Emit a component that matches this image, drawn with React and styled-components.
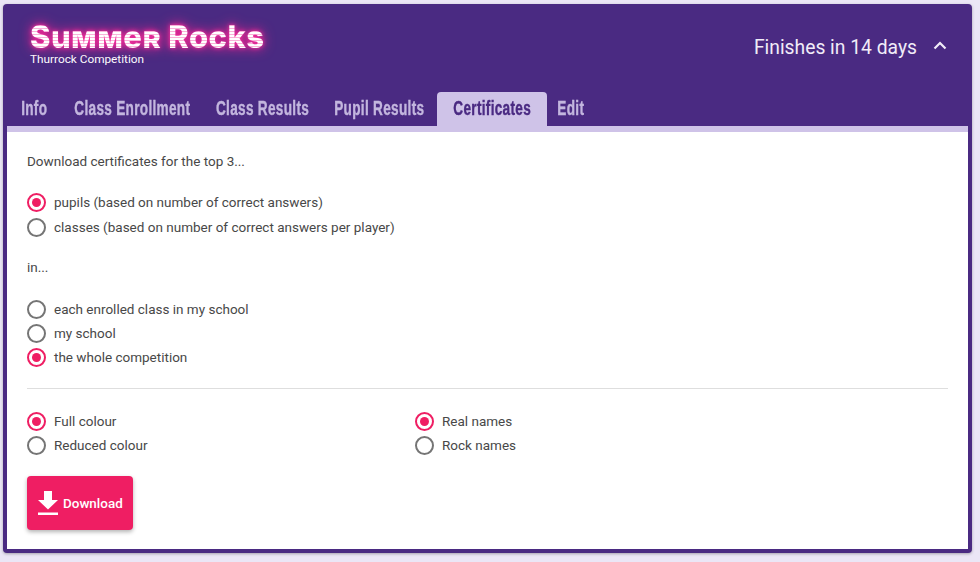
import React from "react";
import styled, { createGlobalStyle } from "styled-components";

const Global = createGlobalStyle`
  html, body { margin: 0; padding: 0; background: #ebe6f6; }
  body { font-family: Roboto, "Liberation Sans", sans-serif; overflow: hidden; }
`;
const Page = styled.div`
  width: 980px; height: 562px; box-sizing: border-box; padding: 4px 8px 9px 3px;
`;
const Card = styled.div`
  height: 100%; box-sizing: border-box; display: flex; flex-direction: column;
  background: #4a2a82; border-radius: 4px; padding: 0 4px 4px;
  box-shadow: 0 1px 3px rgba(0,0,0,.3);
`;
const Header = styled.header`
  height: 88px; display: flex; justify-content: space-between; align-items: flex-start;
`;
const Brand = styled.div` padding: 19px 0 0 23px; `;
const Title = styled.h1`
  margin: 0; font-family: Inter, "DejaVu Sans", sans-serif; font-weight: 800; font-size: 31px; line-height: 27px;
  font-variant: small-caps; letter-spacing: 0.45px; white-space: nowrap;
  color: transparent;
  background: repeating-linear-gradient(180deg, #fff 0 2px, #f9b2d8 2px 3px);
  -webkit-background-clip: text; background-clip: text;
  filter: drop-shadow(0 0 2px #ff2fa0) drop-shadow(0 0 6px #e5228c);
`;
const Subtitle = styled.div`
  font-size: 11.8px; line-height: 14px; color: #fff; margin-top: 2px;
`;
const Status = styled.div`
  display: flex; align-items: center; gap: 14px; padding: 32px 19px 0 0;
  color: #f1ecf8; font-size: 19.3px; line-height: 24px;
`;
const Chevron = styled.svg` margin-top: -5px; `;
const TabBar = styled.nav` display: flex; height: 34px; align-items: stretch; `;
const Tab = styled.div`
  box-sizing: border-box; width: ${p => p.$w}px; flex: none; padding-bottom: 2px;
  display: flex; align-items: center; justify-content: center; border-radius: 4px 4px 0 0;
  color: ${p => (p.$active ? "#4a2a82" : "#c3b6de")};
  background: ${p => (p.$active ? "#cfc3e8" : "transparent")};
`;
const TabLabel = styled.span`
  display: block; white-space: nowrap; transform: scaleX(0.68);
  font-family: "Liberation Sans", sans-serif; font-weight: 700; font-size: 20px; line-height: 24px;
  letter-spacing: 0.45px; -webkit-text-stroke: 0.4px currentColor;
`;
const Strip = styled.div` height: 6px; background: #cfc3e8; `;
const Body = styled.main`
  flex: 1; background: #fff; padding: 20px 20px 0; color: #484848; font-size: 13.5px;
  display: flex; flex-direction: column;
`;
const Para = styled.p` margin: ${p => p.$m || "0"}; line-height: 18px; `;
const Group = styled.div` display: flex; flex-direction: column; margin: ${p => p.$m || "0"}; `;
const Row = styled.label`
  display: flex; align-items: center; gap: 8px; height: ${p => p.$h || 24}px; line-height: 20px;
`;
const Radio = styled.span`
  box-sizing: border-box; width: 19px; height: 19px; border-radius: 50%; flex: none;
  border: 2px solid ${p => (p.$on ? "#ef1e63" : "#757575")};
  display: flex; align-items: center; justify-content: center;
  &::after { content: ""; width: 9px; height: 9px; border-radius: 50%; background: ${p => (p.$on ? "#ef1e63" : "transparent")}; }
`;
const Divider = styled.hr` border: 0; height: 1px; background: #dedede; margin: 19px 0 20px; `;
const Columns = styled.div` display: grid; grid-template-columns: 388px 1fr; `;
const Button = styled.button`
  align-self: flex-start; margin-top: 19px; width: 106px; height: 54px; border: 0; border-radius: 4px;
  background: #ef1e63; color: #fff; font: 500 13.44px Roboto, sans-serif; display: flex; align-items: center;
  gap: 4px; padding: 0 0 0 10px; box-shadow: 0 2px 4px rgba(0,0,0,.3);
`;

const Opt = ({ on, h, children }) => (
  <Row $h={h}><Radio $on={on} /><span>{children}</span></Row>
);

export default function App() {
  return (
    <Page>
      <Global />
      <Card>
        <Header>
          <Brand>
            <Title>Summer Rocks</Title>
            <Subtitle>Thurrock Competition</Subtitle>
          </Brand>
          <Status>
            <span>Finishes in 14 days</span>
            <Chevron width="18" height="18" viewBox="0 0 18 18" fill="none" stroke="#f1ecf8" strokeWidth="2.2">
              <path d="M3.5 11.500 9 6l5.500 5.500" />
            </Chevron>
          </Status>
        </Header>
        <TabBar>
          <Tab $w={54}><TabLabel>Info</TabLabel></Tab>
          <Tab $w={142}><TabLabel>Class Enrollment</TabLabel></Tab>
          <Tab $w={119}><TabLabel>Class Results</TabLabel></Tab>
          <Tab $w={115}><TabLabel>Pupil Results</TabLabel></Tab>
          <Tab $w={110} $active><TabLabel>Certificates</TabLabel></Tab>
          <Tab $w={47}><TabLabel>Edit</TabLabel></Tab>
        </TabBar>
        <Strip />
        <Body>
          <Para>Download certificates for the top 3...</Para>
          <Group $m="19.5px 0 0">
            <Opt on h={25}>pupils (based on number of correct answers)</Opt>
            <Opt h={25}>classes (based on number of correct answers per player)</Opt>
          </Group>
          <Para $m="18.5px 0 0">in...</Para>
          <Group $m="21px 0 0">
            <Opt>each enrolled class in my school</Opt>
            <Opt>my school</Opt>
            <Opt on>the whole competition</Opt>
          </Group>
          <Divider />
          <Columns>
            <Group>
              <Opt on>Full colour</Opt>
              <Opt>Reduced colour</Opt>
            </Group>
            <Group>
              <Opt on>Real names</Opt>
              <Opt>Rock names</Opt>
            </Group>
          </Columns>
          <Button>
            <svg width="22" height="26" viewBox="0 0 22 26" fill="#fff">
              <path d="M7 1h8v9h6L11 19.500 1 10h6z" />
              <rect x="1" y="22.500" width="20" height="2.500" />
            </svg>
            Download
          </Button>
        </Body>
      </Card>
    </Page>
  );
}
